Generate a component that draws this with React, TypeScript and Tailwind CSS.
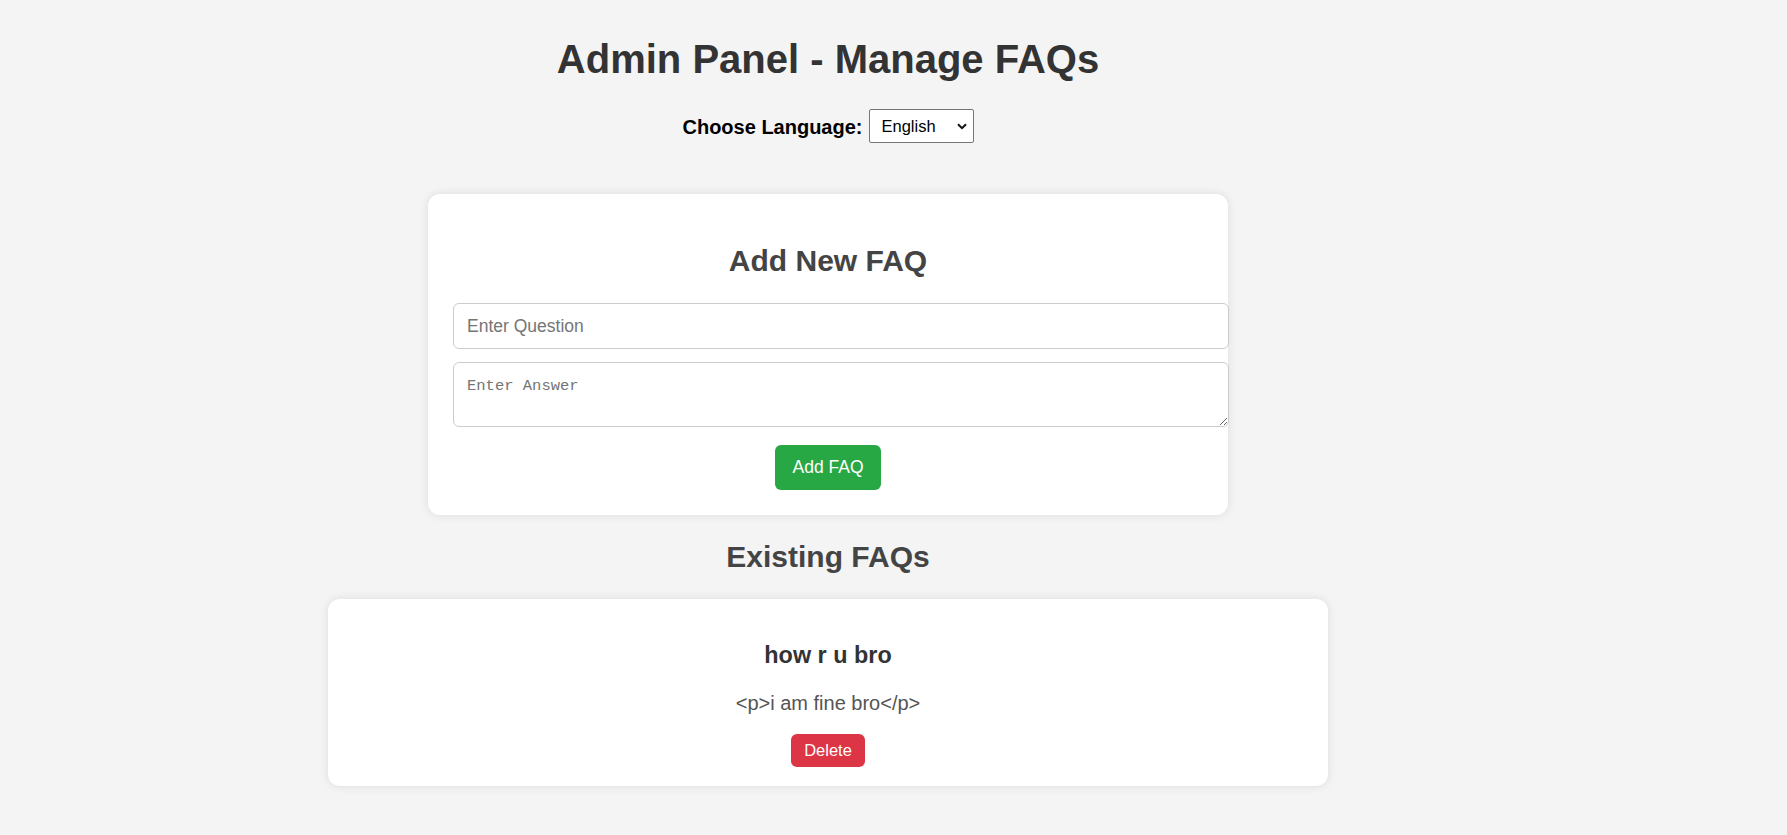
import React from "react";

export default function App() {
  return (
    <div className="min-h-[835px] w-full bg-[#f4f4f4] font-['Liberation_Sans',Arial,sans-serif]">
      <div className="flex w-[1656px] flex-col items-center">
        <h1 className="mt-[36px] text-[40px] font-bold leading-[46px] text-[#333]">
          Admin Panel - Manage FAQs
        </h1>

        <div className="mt-[27px] flex h-[34px] items-center">
          <label className="mr-[6px] mt-[2px] text-[20px] font-bold leading-[23px] text-black">
            Choose Language:
          </label>
          <div className="relative h-[34px] w-[105px]">
            <select
              className="h-[34px] w-[105px] appearance-none rounded-[2px] border border-[#767676] bg-white pl-[12px] text-[16.5px] text-black outline-none"
              defaultValue="en"
            >
              <option value="en">English</option>
              <option value="hi">Hindi</option>
              <option value="bn">Bengali</option>
            </select>
            <svg
              className="pointer-events-none absolute right-[7px] top-[14px]"
              width="10"
              height="7"
              viewBox="0 0 10 7"
              fill="none"
            >
              <path d="M1 1.2L5 5.2L9 1.2" stroke="#111" strokeWidth="2" />
            </svg>
          </div>
        </div>

        <div className="mt-[51px] w-[800px] rounded-[12px] bg-white px-[25px] pb-[25px] pt-[25px] shadow-[0_0_10px_rgba(0,0,0,0.1)]">
          <h2 className="mb-[25.5px] mt-[24.5px] text-center text-[30px] font-bold leading-[34px] text-[#444]">
            Add New FAQ
          </h2>
          <input
            type="text"
            placeholder="Enter Question"
            className="block h-[46px] w-[776px] rounded-[6px] border border-[#ccc] bg-white px-[13px] text-[17.5px] text-[#333] outline-none placeholder:text-[#757575]"
          />
          <textarea
            placeholder="Enter Answer"
            className="mt-[13px] block h-[64.5px] w-[776px] rounded-[6px] border border-[#ccc] bg-white px-[13px] pt-[14px] font-['Liberation_Mono',monospace] text-[15.5px] leading-[18px] text-[#333] outline-none placeholder:text-[#757575]"
          />
          <div className="mt-[18.5px] flex justify-center">
            <button className="h-[45px] w-[106px] rounded-[6px] bg-[#28a745] text-[17.5px] text-white">
              Add FAQ
            </button>
          </div>
        </div>

        <h2 className="mt-[25px] text-center text-[30px] font-bold leading-[34px] text-[#444]">
          Existing FAQs
        </h2>

        <div className="mt-[25px] flex w-[1000px] flex-col items-center rounded-[12px] bg-white pb-[19px] pt-[43px] shadow-[0_0_10px_rgba(0,0,0,0.1)]">
          <h3 className="text-[23.4px] font-bold leading-[27px] text-[#333]">how r u bro</h3>
          <p className="mt-[23px] text-[20px] leading-[23px] text-[#555]">
            {"<p>i am fine bro</p>"}
          </p>
          <button className="mt-[19px] h-[33px] w-[74px] rounded-[6px] bg-[#dc3545] text-[16.5px] text-white">
            Delete
          </button>
        </div>
      </div>
    </div>
  );
}
